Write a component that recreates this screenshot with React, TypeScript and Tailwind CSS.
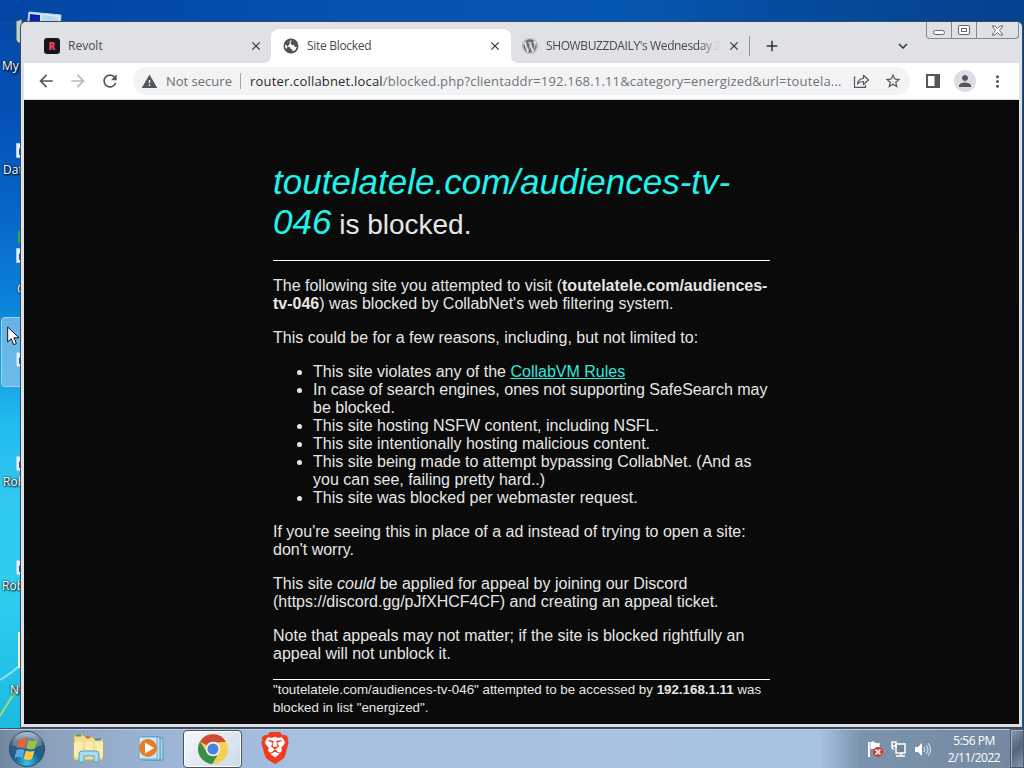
import type { ReactNode } from 'react';
import { FaWordpress } from 'react-icons/fa';
import { MdAdd, MdArrowBack, MdArrowForward, MdClose, MdExpandMore, MdMoreVert, MdPerson, MdRefresh, MdStarBorder, MdWarning } from 'react-icons/md';
import { SiBrave } from 'react-icons/si';

const reasons: ReactNode[] = [
    <>This site violates any of the <a className="text-[#2fe8dc] underline">CollabVM Rules</a></>,
    'In case of search engines, ones not supporting SafeSearch may be blocked.',
    'This site hosting NSFW content, including NSFL.',
    'This site intentionally hosting malicious content.',
    'This site being made to attempt bypassing CollabNet. (And as you can see, failing pretty hard..)',
    'This site was blocked per webmaster request.',
];

function Shortcut({ className }: { className: string }) {
    return (
        <svg className={`absolute left-[16px] ${className}`} width="12" height="15" viewBox="0 0 12 15">
            <rect width="12" height="15" fill="#e5f0f8" stroke="#6fa9cf" />
            <path d="M3 12V7q0-3 4-3V2l5 4-5 4V7q-2 0-3 5z" fill="#1d4f9c" />
        </svg>
    );
}

function Label({ className, children }: { className: string; children: ReactNode }) {
    return (
        <span className={`absolute text-[12px] leading-4 text-white whitespace-nowrap [text-shadow:1px_1px_2px_#000,0_0_2px_#000] ${className}`}>
            {children}
        </span>
    );
}

function Desktop() {
    return (
        <div className="absolute inset-0 overflow-hidden">
            <div className="absolute inset-0 bg-[linear-gradient(180deg,#0448a6_0px,#0650b4_110px,#0663c4_200px,#0b82d8_300px,#17a3e6_380px,#22b9ef_420px,#31c9ee_500px,#2ecdee_600px,#1cb9e0_728px)]" />
            <div className="absolute inset-x-0 top-0 h-[22px] bg-[linear-gradient(90deg,#0345a4_0%,#0552b0_35%,#0657b2_60%,#054a9c_80%,#03428c_100%)]" />
            <div className="absolute top-0 right-0 w-[3px] h-[728px] bg-[linear-gradient(180deg,#03428c,#04407f_40%,#0d5291)]" />

            {/* Wallpaper light streaks */}
            <svg className="absolute left-0 top-[620px]" width="24" height="108" viewBox="0 0 24 108">
                <path d="M0 60Q12 53 24 42" stroke="#8be4f4" strokeWidth="2" fill="none" />
                <path d="M0 96Q10 78 24 60" stroke="#9fdc7b" strokeWidth="2" fill="none" />
            </svg>

            {/* My Computer */}
            <svg className="absolute left-[15px] top-[10px]" width="48" height="36" viewBox="0 0 48 36">
                <path d="M1 11l6-2v24H3l-2-3z" fill="#b9d0cb" stroke="#334c54" />
                <path d="M14 2l32 3-1 13H12z" fill="#dcebf5" stroke="#b5d3eb" />
                <path d="M15 4l10 1v11H14z" fill="#0922ae" />
                <path d="M27 5l16 2v10H26z" fill="#b7d8ef" />
            </svg>
            <Label className="left-[2px] top-[58px]">My</Label>
            <Shortcut className="top-[143px]" />
            <Label className="left-[3px] top-[162px]">Data</Label>
            <div className="absolute left-[18px] top-[231px] w-1 h-3 bg-[#35a94a]" />
            <Shortcut className="top-[248px]" />
            <Label className="left-[17px] top-[281px]">G</Label>
            <div className="absolute left-px top-[317px] w-10 h-[70px] rounded-sm border border-[#9bd3f3] bg-[#8fc5ea]/70" />
            <Shortcut className="top-[352px]" />
            <Shortcut className="top-[456px]" />
            <Label className="left-[3px] top-[474px]">Roblox</Label>
            <Shortcut className="top-[560px]" />
            <Label className="left-[2px] top-[578px]">Roblox</Label>
            <div className="absolute left-[18px] top-[632px] w-2 h-9 bg-[#f2edc9]" />
            <Label className="left-[10px] top-[682px]">New</Label>
            <svg className="absolute left-[7px] top-[326px]" width="13" height="20" viewBox="0 0 13 20">
                <path d="M.7 1v15l3.500-3.300L6.700 18.700l2.700-1.200-2.500-5.700H12z" fill="#fff" stroke="#111" />
            </svg>
        </div>
    );
}

function WindowButtons() {
    return (
        <div className="absolute right-0 top-0 flex h-[17px] w-[93px] rounded-b border border-t-0 border-[#858991] text-[#60646c]">
            <div className="flex w-[25px] items-center justify-center border-r border-[#858991]">
                <div className="mt-1 h-[5px] w-3 rounded-sm border border-current bg-white" />
            </div>
            <div className="flex w-[25px] items-center justify-center border-r border-[#858991]">
                <div className="flex h-[10px] w-3 items-center justify-center rounded-xs border border-current bg-white">
                    <div className="h-1 w-[6px] border border-current" />
                </div>
            </div>
            <div className="flex flex-1 items-center justify-center">
                <svg width="13" height="11" viewBox="0 0 13 11">
                    <path d="M1 1h3l2.500 2.500L9 1h3L8.500 5.500 12 10H9L6.500 7.500 4 10H1l3.500-4.500z" fill="#fff" stroke="currentColor" />
                </svg>
            </div>
        </div>
    );
}

function Globe() {
    return (
        <svg width="16" height="16" viewBox="0 0 16 16">
            <circle cx="8" cy="8" r="7.300" fill="#505357" />
            <path d="M9 2.200q-2.800.2-2.500 2.300.3 1 1.500.8-.2 1.700 1.500 1.700 2 0 2.300 1.700 1 .8 2.300-.2-.6 4-4.300 5.100.3-1.600-1-2.200-1.700-.5-1.500-2.200-2.800.2-4-2L2 6.500Q1.300 9 3 11.200" fill="#fff" />
            <circle cx="8" cy="8" r="6.700" fill="none" stroke="#505357" strokeWidth="1.500" />
        </svg>
    );
}

function TabStrip() {
    return (
        <div className="relative flex h-[41px] bg-[#dfe1e5] pt-[7px] text-[12px] text-[#46494d]">
            <div className="flex w-[247px] items-center pl-5 pr-[8px]">
                <div className="flex size-4 items-center justify-center rounded-[3px] bg-[#15161c] text-[10px] font-black text-[#f0455c]">R</div>
                <span className="ml-2 flex-1">Revolt</span>
                <MdClose className="size-[14px] text-[#303336]" />
            </div>
            <div className="relative flex w-[240px] items-center rounded-t-lg bg-white pl-[12px] pr-[9px]">
                <svg className="absolute -left-2 bottom-0" width="8" height="8"><path d="M8 0v8H0q8 0 8-8" fill="#fff" /></svg>
                <svg className="absolute -right-2 bottom-0" width="8" height="8"><path d="M0 0v8h8Q0 8 0 0" fill="#fff" /></svg>
                <Globe />
                <span className="ml-2 flex-1 tracking-[-0.3px]">Site Blocked</span>
                <MdClose className="size-[14px] text-[#303336]" />
            </div>
            <div className="flex w-[238px] items-center pl-[11px] pr-[8px]">
                <FaWordpress className="size-4 shrink-0 text-[#6b6e70]" />
                <span className="ml-2 w-[174px] overflow-hidden whitespace-nowrap tracking-[-0.38px] [mask-image:linear-gradient(90deg,#000_88%,transparent)]">SHOWBUZZDAILY's Wednesday 2</span>
                <MdClose className="ml-[7px] size-[14px] shrink-0 text-[#303336]" />
            </div>
            <div className="mt-[7px] h-5 w-px bg-[#909398]" />
            <MdAdd className="ml-[13px] mt-[8px] size-[18px] text-[#303336]" />
            <MdExpandMore className="ml-[113px] mt-[8px] size-[18px] text-[#303336]" />
            <WindowButtons />
        </div>
    );
}

function Toolbar() {
    return (
        <div className="flex h-[37px] items-center border-b border-[#dcdee0] bg-white text-[#54575b]">
            <MdArrowBack className="ml-[12px] size-5" />
            <MdArrowForward className="ml-3 size-5 text-[#b7babd]" />
            <MdRefresh className="ml-3 size-5" />
            <div className="ml-[13px] flex h-7 w-[777px] items-center rounded-full bg-[#f2f3f4] pl-2">
                <MdWarning className="size-[17px]" />
                <span className="ml-2 w-[67px] whitespace-nowrap pt-px text-[13px] text-[#6b6e72]">Not secure</span>
                <div className="ml-[7px] h-4 w-px bg-[#a5a8ab]" />
                <span className="ml-[9px] w-[592px] whitespace-nowrap pt-px text-[13px] tracking-[0.185px] text-[#707377]">
                    <span className="text-[#292b2e]">router.collabnet.local</span>/blocked.php?clientaddr=192.168.1.11&amp;category=energized&amp;url=toutela...
                </span>
                <svg className="ml-[11px]" width="17" height="16" viewBox="0 0 17 16" fill="none" stroke="currentColor" strokeWidth="1.200">
                    <path d="M2.500 4H1.500v10.300h11V12" />
                    <path d="M4.500 11q.6-5 6-5.500V2.200L15.500 7l-5 4.500V8.500q-4 0-6 2.500z" strokeLinejoin="round" />
                </svg>
                <MdStarBorder className="ml-[14px] size-[18px]" />
            </div>
            <svg className="ml-[16px]" width="14" height="14" viewBox="0 0 14 14">
                <rect x="1" y="1" width="12" height="12" fill="none" stroke="currentColor" strokeWidth="2" />
                <rect x="8.500" y="1" width="5" height="12" fill="currentColor" />
            </svg>
            <div className="ml-[14px] flex size-[22px] items-center justify-center rounded-full bg-[#dcdee3]">
                <MdPerson className="size-[18px]" />
            </div>
            <MdMoreVert className="ml-[12px] size-[19px]" />
        </div>
    );
}

function BlockedPage() {
    return (
        <main className="h-[624px] bg-[#0a0a0a] pt-[62px] font-['Liberation_Sans',Arial,sans-serif] text-[16px] leading-[18px] text-[#e6e6e6]">
            <div className="ml-[249px] w-[497px]">
                <h1 className="text-[28px] leading-8"><em className="text-[35px] leading-10 text-[#1ff3ec]">toutelatele.com/audiences-tv-046</em> is blocked.</h1>
                <hr className="mt-[18px] border-white" />
                <p className="mt-4">
                    The following site you attempted to visit (<b>toutelatele.com/audiences-tv-046</b>) was blocked by CollabNet's web filtering system.
                </p>
                <p className="mt-4">This could be for a few reasons, including, but not limited to:</p>
                <ul className="mt-4 list-disc pl-10">
                    {reasons.map((reason, i) => <li key={i}>{reason}</li>)}
                </ul>
                <p className="mt-4">If you're seeing this in place of a ad instead of trying to open a site: don't worry.</p>
                <p className="mt-4">This site <i>could</i> be applied for appeal by joining our Discord (https://discord.gg/pJfXHCF4CF) and creating an appeal ticket.</p>
                <p className="mt-4">Note that appeals may not matter; if the site is blocked rightfully an appeal will not unblock it.</p>
                <hr className="mt-4 border-white" />
                <p className="pt-px text-[13.333px]">
                    "toutelatele.com/audiences-tv-046" attempted to be accessed by <b>192.168.1.11</b> was blocked in list "energized".
                </p>
            </div>
        </main>
    );
}

function StartOrb() {
    return (
        <svg width="38" height="38" viewBox="0 0 38 38">
            <defs>
                <radialGradient id="orb" cx=".5" cy=".9" r=".85">
                    <stop offset="0" stopColor="#35c5e8" />
                    <stop offset=".45" stopColor="#17618f" />
                    <stop offset=".8" stopColor="#395874" />
                    <stop offset="1" stopColor="#a9bccb" />
                </radialGradient>
            </defs>
            <circle cx="19" cy="19" r="17.500" fill="url(#orb)" stroke="#28496a" />
            <path d="M4 15A16 16 0 0 1 34 15Q19 22 4 15" fill="#fff" opacity=".25" />
            <path d="M11 10q4-3 8-1l-2 9q-4-2-8 0z" fill="#e8613a" />
            <path d="M20.500 10q4 2 9-.5l-2.500 9q-4 2-8.500 0z" fill="#94c348" />
            <path d="M8.500 20q4-2 8 0l-2 8q-4-2-8 0z" fill="#55a8e2" />
            <path d="M18 20.500q4 2 8.500.3L24 29q-4 2-8.500 0z" fill="#fbc93f" />
        </svg>
    );
}

function Explorer() {
    return (
        <svg width="34" height="30" viewBox="0 0 34 30">
            <path d="M2 3l1-2h8l2 2h8l1 2h9v21H2z" fill="#f3df91" stroke="#c8a851" />
            <path d="M4 1.500h5" stroke="#36a456" strokeWidth="2" />
            <path d="M14 3.500h4" stroke="#d85c39" strokeWidth="2" />
            <path d="M23 5.500h6" stroke="#3d89c8" strokeWidth="2" />
            <path d="M2 8h29v15H2z" fill="#faebae" />
            <path d="M12 8v12M22 8v12" stroke="#e2c978" />
            <path d="M7 28v-8q0-3 3-3h14q3 0 3 3v8h-5v-6H12v6z" fill="#a8dcf1" stroke="#559fca" />
        </svg>
    );
}

function MediaPlayer() {
    return (
        <svg width="30" height="26" viewBox="0 0 30 26">
            <path d="M9 2h17v22H9z" fill="#a7d2e8" stroke="#5a9dbf" />
            <path d="M5 1h18v23H5z" fill="#c2e1ef" stroke="#4d96bf" />
            <path d="M2 1h18v22H2z" fill="#d1e9f3" stroke="#65a8c9" />
            <circle cx="11" cy="12" r="8.500" fill="#ec7b24" stroke="#c9813d" />
            <path d="M8 6.500v11l9-5.500z" fill="#fff" />
        </svg>
    );
}

function Chrome() {
    return (
        <svg width="30" height="30" viewBox="0 0 30 30">
            <circle cx="15" cy="15" r="15" fill="#f8cf55" />
            <path d="M15 15L2 7.500A15 15 0 0 1 28 8.200H15z" fill="#ce4b3b" />
            <path d="M2 7.500A15 15 0 0 0 14.500 30L21 18.500 9 18.500z" fill="#35904c" />
            <path d="M28 8.200A15 15 0 0 1 14.500 30l7-12L21.500 8.200z" fill="#f8cf55" />
            <circle cx="15" cy="15" r="7.300" fill="#f7f5ee" />
            <circle cx="15" cy="15" r="5.600" fill="#4c83df" />
        </svg>
    );
}

function Brave() {
    return (
        <div className="relative size-[32px]">
            <div className="absolute inset-x-[7px] inset-y-[5px] rounded-b-full bg-white" />
            <SiBrave className="absolute inset-0 size-[32px] text-[#f03c1c]" />
        </div>
    );
}

function Taskbar() {
    return (
        <div className="absolute inset-x-0 bottom-0 flex h-10 items-center border-t border-[#414f60] bg-[linear-gradient(90deg,#7286a0_0px,#8ba1bd_50px,#9bb4d3_150px,#a7c0df_300px,#a8c2e2_820px,#7b93ae_860px,#74899f_1024px)] shadow-[inset_0_1px_0_#c1cfdf]">
            <div className="ml-2"><StartOrb /></div>
            <div className="ml-[26px]"><Explorer /></div>
            <div className="ml-[31px]"><MediaPlayer /></div>
            <div className="ml-[16px] flex h-[38px] w-[59px] items-center justify-center rounded-sm border border-[#455463] bg-[linear-gradient(135deg,#f5f8fb,#ccd9e7)] shadow-[inset_0_0_0_1px_#fff]">
                <Chrome />
            </div>
            <div className="-mt-0.5 ml-[17px]"><Brave /></div>
            <svg className="ml-auto" width="65" height="18" viewBox="0 0 65 18">
                <path d="M2 2v15" stroke="#fff" strokeWidth="2" />
                <path d="M3 2q3-2 5 0t5 0v8q-3 2-5 0t-5 0z" fill="#fff" stroke="#5c6c7e" strokeWidth=".5" />
                <circle cx="11" cy="12" r="5" fill="#cf3b2e" />
                <path d="M8.500 9.500l5 5m0-5l-5 5" stroke="#fff" strokeWidth="1.700" />
                <path d="M29 4h9v9h-9z" fill="#6f8495" stroke="#fff" strokeWidth="1.500" />
                <path d="M25 2v5q0 2 2 2M25 2h4v4h-4zM29 16h9M34 13v3" fill="none" stroke="#fff" strokeWidth="1.400" />
                <path d="M48 7h3l4-4v13l-4-4h-3z" fill="#fff" />
                <path d="M57 7q2 2.500 0 5M59 5q4 4.500 0 9M61 3q5 6.500 0 13" fill="none" stroke="#e9f2fa" />
            </svg>
            <div className="ml-[14px] w-[56px] whitespace-nowrap text-center text-[12px] leading-[17px] tracking-[-0.5px] text-white">
                <div>5:56 PM</div>
                <div>2/11/2022</div>
            </div>
            <div className="ml-[8px] h-full w-[14px] border border-[#4b5b6e] bg-[linear-gradient(135deg,#8c9bad,#52657b_50%,#8495a9)] shadow-[inset_1px_1px_0_#a7b4c2]" />
        </div>
    );
}

export default function App() {
    return (
        <div className="relative h-[768px] w-[1024px] overflow-hidden bg-[#0650b4] font-['Open_Sans','Noto_Sans',sans-serif]">
            <Desktop />
            <div className="absolute left-5 top-[21px] h-[707px] w-[1003px] overflow-hidden rounded-t-md border border-[#384b60] bg-[#dfe1e5] pl-[3px] pr-[3px]">
                <TabStrip />
                <Toolbar />
                <BlockedPage />
            </div>
            <Taskbar />
        </div>
    );
}
